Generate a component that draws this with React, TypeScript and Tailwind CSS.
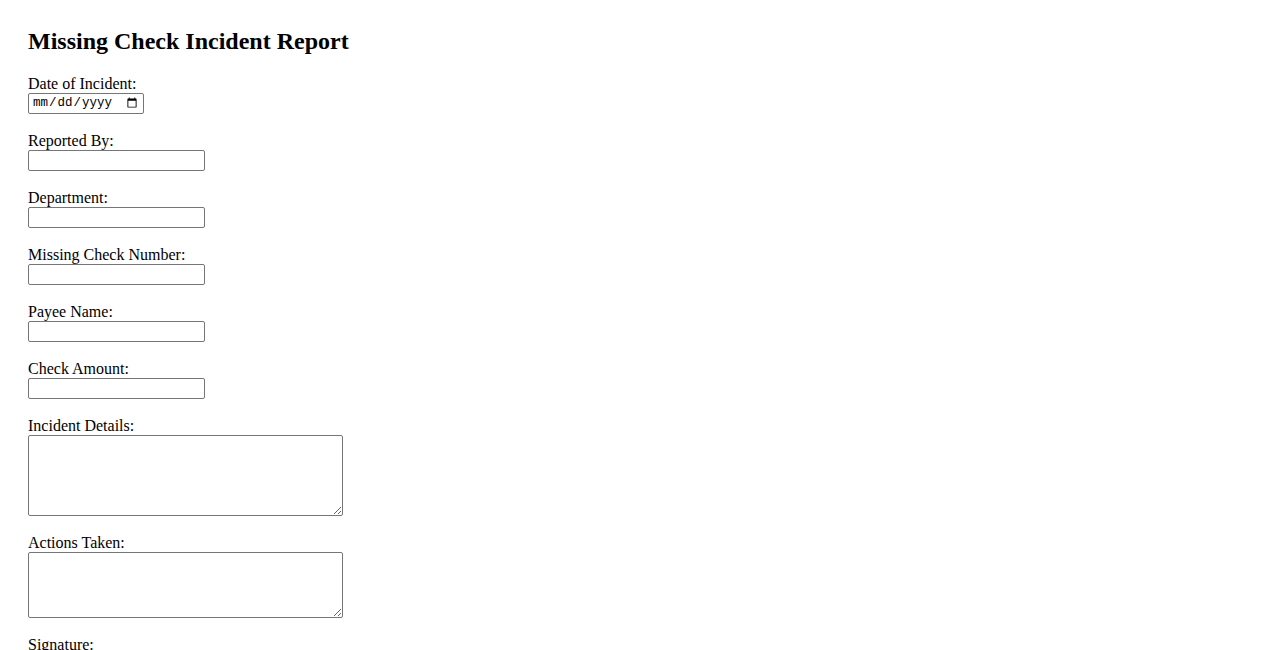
import React from "react";

const textFields = [
  "Reported By:",
  "Department:",
  "Missing Check Number:",
  "Payee Name:",
  "Check Amount:",
];

export default function App() {
  return (
    <div className="min-h-screen bg-white text-black font-['Liberation_Serif','Times_New_Roman',serif] text-[16px] px-[28px] pt-[27px]">
      <h2 className="text-[24px] font-bold leading-[28px] mb-[20px]">Missing Check Incident Report</h2>
      <form className="flex flex-col items-start">
        <label className="block leading-[18px]">Date of Incident:</label>
        <input
          type="date"
          className="w-[116px] h-[21px] border border-[#767676] rounded-[2px] px-[3px] py-0 font-['Liberation_Mono','Courier_New',monospace] text-[12.5px] leading-[15px] mb-[18px]"
        />
        {textFields.map((f) => (
          <React.Fragment key={f}>
            <label className="block leading-[18px]">{f}</label>
            <input
              type="text"
              className="w-[177px] h-[21px] border border-[#767676] rounded-[2px] px-[2px] mb-[18px] font-['Liberation_Sans',Arial,sans-serif] text-[13.33px]"
            />
          </React.Fragment>
        ))}
        <label className="block leading-[18px]">Incident Details:</label>
        <textarea
          rows={5}
          className="w-[315px] h-[81px] border border-[#767676] rounded-[2px] p-[2px] mb-[18px] font-['Liberation_Mono',monospace] text-[13.33px]"
        />
        <label className="block leading-[18px]">Actions Taken:</label>
        <textarea
          rows={4}
          className="w-[315px] h-[66px] border border-[#767676] rounded-[2px] p-[2px] mb-[18px] font-['Liberation_Mono',monospace] text-[13.33px]"
        />
        <label className="block leading-[18px]">Signature:</label>
        <input
          type="text"
          className="w-[177px] h-[21px] border border-[#767676] rounded-[2px] px-[2px] mb-[18px]"
        />
        <label className="block leading-[18px]">Date Signed:</label>
        <input
          type="date"
          className="w-[116px] h-[21px] border border-[#767676] rounded-[2px] px-[3px] mb-[18px] font-['Liberation_Mono',monospace] text-[12.5px]"
        />
      </form>
    </div>
  );
}
